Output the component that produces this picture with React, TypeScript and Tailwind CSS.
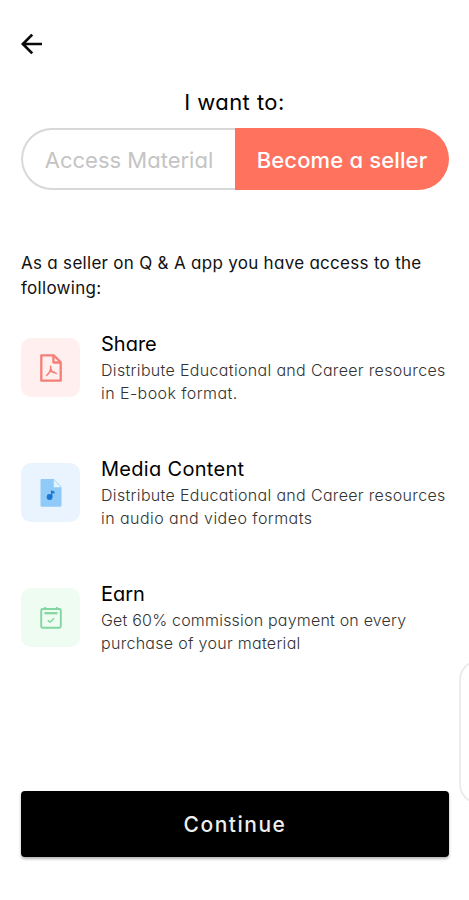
import React, { useState } from 'react';

type Role = 'access' | 'seller';

const BackIcon: React.FC = () => (
  <svg width="22" height="22" viewBox="0 0 22 22" fill="none" stroke="#0a0a0a" strokeWidth="2.7">
    <path d="M21 11H2M11.2 1.6L1.9 11l9.3 9.4" />
  </svg>
);

const PdfIcon: React.FC = () => (
  <svg width="22" height="28" viewBox="0 0 22 28" fill="none" stroke="#f57f76" strokeWidth="2.3" strokeLinejoin="round">
    <path d="M1.3 1.3h12.4l7 7v18.4H1.3z" />
    <path d="M13.4 1.6v6.9h7" />
    <path d="M10.6 12.2c.7 3.4.1 5.6-4 9.3M9.9 17.6c2.3-.5 4.5.4 6.4 1.9M10.7 14.5c.5 2.2 1.5 3.4 3.2 4.2" strokeWidth="1.5" strokeLinecap="round" />
  </svg>
);

const MusicIcon: React.FC = () => (
  <svg width="22" height="28" viewBox="0 0 22 28">
    <path d="M1.5 0h12.3L21.5 8v18.5a1.2 1.2 0 0 1-1.2 1.2H1.7A1.2 1.2 0 0 1 .5 26.5V1a1 1 0 0 1 1-1z" fill="#90caf9" />
    <path d="M13.8.8v7.4H21z" fill="#e1f5fe" />
    <circle cx="9.6" cy="18" r="2.9" fill="#1976d2" />
    <path d="M11 18v-6.8l3.5 1.2v2.3L12.4 14v4z" fill="#1976d2" />
  </svg>
);

const CalendarIcon: React.FC = () => (
  <svg width="22" height="22" viewBox="0 0 22 22" fill="none" stroke="#83d6a1" strokeWidth="1.9" strokeLinejoin="round">
    <rect x="1.2" y="2" width="19.6" height="18.8" rx="1.5" />
    <path d="M5.2 0v2M16.8 0v2" />
    <path d="M4.5 6.2h13" strokeWidth="2.3" />
    <path d="M7.8 13.3l2.1 2 4.2-4" strokeWidth="1.5" />
  </svg>
);

const benefits = [
  {
    title: 'Share',
    titleTracking: 'tracking-normal',
    lines: ['Distribute Educational and Career resources', 'in E-book format.'],
    tile: 'bg-[#ffefee]',
    icon: <PdfIcon />,
    tracking: ['tracking-[0.33px]', 'tracking-[0.43px]'],
  },
  {
    title: 'Media Content',
    titleTracking: 'tracking-[0.3px]',
    lines: ['Distribute Educational and Career resources', 'in audio and video formats'],
    tile: 'bg-[#e9f4fe]',
    icon: <MusicIcon />,
    tracking: ['tracking-[0.33px]', 'tracking-[0.45px]'],
  },
  {
    title: 'Earn',
    titleTracking: 'tracking-[0px]',
    lines: ['Get 60% commission payment on every', 'purchase of your material'],
    tile: 'bg-[#eefcf2]',
    icon: <CalendarIcon />,
    tracking: ['tracking-[0.2px]', 'tracking-[0.29px]'],
  },
];

const App: React.FC = () => {
  const [role, setRole] = useState<Role>('seller');

  const tab = (value: Role) =>
    role === value ? 'bg-[#ff725e] text-white' : 'bg-white text-[#c4c4c4] border-2 border-[#d8d8d8]';

  return (
    <div className="relative h-[900px] w-full overflow-hidden bg-white px-[21px] pt-[33px] text-[#111111] font-['Inter','Liberation_Sans',sans-serif] [font-feature-settings:'cv11']">
      <button className="block" aria-label="Back">
        <BackIcon />
      </button>

      <h1 className="mt-[32px] text-center text-[22px] leading-[30px] tracking-[0.45px] text-black">I want to:</h1>

      <div className="mt-[11px] flex h-[62px] w-[428px]">
        <button
          onClick={() => setRole('access')}
          className={`w-[214px] rounded-l-full border-r-0 pt-[2px] text-[22px] whitespace-nowrap ${tab('access')}`}
        >
          Access Material
        </button>
        <button
          onClick={() => setRole('seller')}
          className={`w-[214px] rounded-r-full pt-[2px] text-[22px] font-medium tracking-[0.15px] whitespace-nowrap ${tab('seller')}`}
        >
          Become a seller
        </button>
      </div>

      <p className="mt-[61px] text-[17px] leading-[25px] tracking-[0.29px] whitespace-nowrap">
        As a seller on Q &amp; A app you have access to the
        <br />
        following:
      </p>

      <div className="mt-[31px] space-y-[52px]">
        {benefits.map(item => (
          <div key={item.title} className="flex h-[73px] gap-[21px]">
            <div className={`mt-[6px] flex h-[59px] w-[59px] shrink-0 items-center justify-center rounded-[10px] ${item.tile}`}>
              {item.icon}
            </div>
            <div className="whitespace-nowrap">
              <h2 className={`text-[20px] leading-[24px] text-black ${item.titleTracking}`}>{item.title}</h2>
              <div className="mt-[3px] text-[16px] font-light leading-[23px] text-[#333333]">
                {item.lines.map((line, i) => (
                  <p key={line} className={item.tracking[i]}>{line}</p>
                ))}
              </div>
            </div>
          </div>
        ))}
      </div>

      <button className="mt-[136px] block h-[66px] w-[428px] rounded-[4px] bg-black pt-[2px] text-[21px] font-medium tracking-[1.5px] text-[#eeeeee] shadow-[0_2px_3px_rgba(0,0,0,0.3)]">
        Continue
      </button>

      {/* edge panel handle */}
      <div className="absolute top-[660px] left-[459px] h-[144px] w-[60px] rounded-[20px] border-2 border-[#ececec] bg-white" />
    </div>
  );
};

export default App;
